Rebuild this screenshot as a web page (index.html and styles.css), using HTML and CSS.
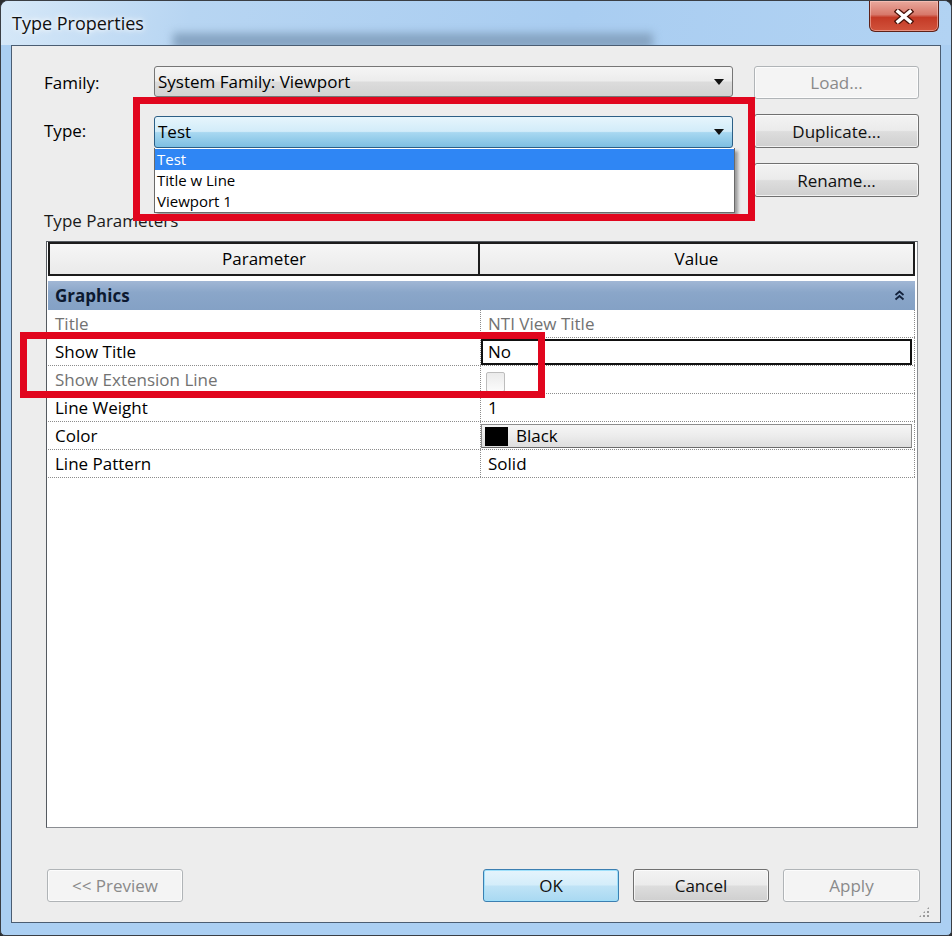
FILE: index.html
```html
<!DOCTYPE html>
<html lang="en">
<head>
    <meta charset="UTF-8">
    <title>Type Properties</title>
    <link rel="stylesheet" href="styles.css">
</head>
<body>
    <div class="window">
        <!-- Title bar -->
        <div class="title-bar">
            <span class="title">Type Properties</span>
            <button class="close-btn" aria-label="Close">
                <svg width="20" height="15" viewBox="0 0 20 15">
                    <path d="M4 2.5 L16 12.5 M16 2.5 L4 12.5" stroke="#4a1209" stroke-width="6" stroke-linecap="square" fill="none"/>
                    <path d="M4 2.5 L16 12.5 M16 2.5 L4 12.5" stroke="#ffffff" stroke-width="3.4" stroke-linecap="square" fill="none"/>
                </svg>
            </button>
        </div>

        <div class="frame">
            <div class="client">
                <!-- Family / Type selectors -->
                <div class="top-grid">
                    <label class="field-label">Family:</label>
                    <div class="combo combo-family">
                        <span>System Family: Viewport</span>
                        <span class="arrow"></span>
                    </div>
                    <button class="btn" disabled>Load...</button>

                    <label class="field-label">Type:</label>
                    <div class="combo combo-open">
                        <span>Test</span>
                        <span class="arrow"></span>
                        <ul class="dropdown">
                            <li class="selected">Test</li>
                            <li>Title w Line</li>
                            <li>Viewport 1</li>
                        </ul>
                    </div>
                    <button class="btn">Duplicate...</button>

                    <button class="btn rename-btn">Rename...</button>
                </div>

                <div class="section-label">Type Parameters</div>

                <!-- Parameter table -->
                <div class="param-table">
                    <div class="table-head">
                        <div class="th">Parameter</div>
                        <div class="th">Value</div>
                    </div>
                    <div class="group-row">
                        <span>Graphics</span>
                        <svg class="collapse" width="11" height="11" viewBox="0 0 11 11">
                            <path d="M1.5 5 L5.5 1.5 L9.5 5 M1.5 9.5 L5.5 6 L9.5 9.5" stroke="#14233d" stroke-width="1.8" fill="none"/>
                        </svg>
                    </div>
                    <div class="row dim">
                        <div class="cell">Title</div>
                        <div class="cell">NTI View Title</div>
                    </div>
                    <div class="row">
                        <div class="cell">Show Title</div>
                        <div class="cell"><div class="edit-box">No</div></div>
                    </div>
                    <div class="row dim">
                        <div class="cell">Show Extension Line</div>
                        <div class="cell"><span class="checkbox"></span></div>
                    </div>
                    <div class="row">
                        <div class="cell">Line Weight</div>
                        <div class="cell">1</div>
                    </div>
                    <div class="row">
                        <div class="cell">Color</div>
                        <div class="cell"><div class="color-btn"><span class="swatch"></span>Black</div></div>
                    </div>
                    <div class="row">
                        <div class="cell">Line Pattern</div>
                        <div class="cell">Solid</div>
                    </div>
                </div>

                <!-- Dialog buttons -->
                <div class="button-row">
                    <button class="btn" disabled>&lt;&lt; Preview</button>
                    <div class="spacer"></div>
                    <button class="btn btn-default">OK</button>
                    <button class="btn">Cancel</button>
                    <button class="btn" disabled>Apply</button>
                </div>

                <!-- Annotation boxes -->
                <div class="highlight hl-type"></div>
                <div class="highlight hl-title"></div>
                <div class="grip"></div>
            </div>
        </div>
    </div>
</body>
</html>
```

FILE: styles.css
```css
* {
    margin: 0;
    padding: 0;
    box-sizing: border-box;
}

body {
    background-color: #2b2d30;
    font-family: "Open Sans", "Noto Sans", sans-serif;
    font-size: 17px;
    color: #000000;
}

.window {
    width: 952px;
    height: 936px;
    border: 1px solid #3a3e44;
    border-radius: 8px 8px 5px 5px;
    background-color: #abcff2;
    display: flex;
    flex-direction: column;
    overflow: hidden;
}

/* Title bar */

.title-bar {
    position: relative;
    height: 44px;
    flex-shrink: 0;
    display: flex;
    justify-content: space-between;
    align-items: flex-start;
    background: linear-gradient(100deg, #d6e8f8 0%, #b7d5f2 20%, #a9cdf1 60%, #b2d3f3 100%);
}

.title-bar::before {
    content: "";
    position: absolute;
    left: 172px;
    top: 32px;
    width: 480px;
    height: 16px;
    background-color: #86a4c2;
    filter: blur(4px);
}

.title {
    position: relative;
    padding: 10px 0 0 11px;
    font-size: 18px;
    line-height: 24px;
    color: #111111;
    text-shadow: 0 0 8px #ffffff, 0 0 4px #ffffff;
}

.close-btn {
    position: relative;
    width: 70px;
    height: 31px;
    margin-right: 12px;
    border: 1px solid #5e2118;
    border-top: none;
    border-radius: 0 0 6px 6px;
    background: linear-gradient(#e9a99d 0%, #d8786a 45%, #c43a26 55%, #d1533c 100%);
    box-shadow: inset 0 0 0 1px rgba(255, 210, 200, 0.5);
    display: flex;
    justify-content: center;
    align-items: center;
}

/* Frame and client area */

.frame {
    flex: 1;
    padding: 0 10px 12px 10px;
    display: flex;
}

.client {
    position: relative;
    flex: 1;
    background-color: #ededed;
    border: 1px solid #4b5d72;
    display: flex;
    flex-direction: column;
}

.top-grid {
    display: grid;
    grid-template-columns: 89px 579px 165px;
    grid-template-rows: 33px 34px 34px;
    column-gap: 21px;
    row-gap: 15px;
    padding: 20px 0 0 32px;
}

.field-label {
    align-self: center;
    line-height: 22px;
}

.combo {
    position: relative;
    display: flex;
    align-items: center;
    justify-content: space-between;
    padding: 0 8px 0 3px;
    border: 1px solid #767676;
    border-radius: 3px;
    line-height: 22px;
}

.combo-family {
    align-self: start;
    height: 31px;
    background: linear-gradient(#f5f5f5 0%, #ececec 48%, #dcdcdc 52%, #d2d2d2 100%);
}

.combo-open {
    align-self: end;
    height: 32px;
    border-color: #2c5f86;
    background: linear-gradient(#e6f5fc 0%, #d2ecf9 48%, #a8d8f1 52%, #7dbfe2 100%);
}

.arrow {
    width: 0;
    height: 0;
    border-left: 5px solid transparent;
    border-right: 5px solid transparent;
    border-top: 6px solid #111111;
}

.dropdown {
    position: absolute;
    top: 31px;
    left: -1px;
    width: 581px;
    list-style: none;
    background-color: #ffffff;
    border: 1px solid #6a6a6a;
    border-top: none;
    box-shadow: 3px 3px 3px rgba(0, 0, 0, 0.35);
    z-index: 2;
}

.dropdown li {
    height: 21px;
    font-size: 15px;
    line-height: 21px;
    padding-left: 2px;
}

.dropdown li.selected {
    margin-top: 1px;
    background-color: #2f86f4;
    color: #ffffff;
}

/* Buttons */

.btn {
    font-family: inherit;
    font-size: 17px;
    color: #111111;
    border: 1px solid #707070;
    border-radius: 3px;
    background: linear-gradient(#f3f3f3 0%, #ebebeb 48%, #dddddd 52%, #cfcfcf 100%);
    box-shadow: inset 0 0 0 1px rgba(255, 255, 255, 0.7);
}

.btn:disabled {
    color: #8a8a8a;
    border-color: #b0b4b7;
    background: #f4f4f4;
}

.btn-default {
    border-color: #3c7fb1;
    background: linear-gradient(#e5f4fc 0%, #d4edfa 48%, #bfe3f6 52%, #a9d9f2 100%);
    box-shadow: inset 0 0 0 1px #9ee0fb;
}

.rename-btn {
    grid-column: 3;
}

.section-label {
    margin: 13px 0 0 32px;
    line-height: 22px;
    color: #1a1a1a;
}

/* Parameter table */

.param-table {
    margin: 9px 0 0 34px;
    width: 872px;
    height: 587px;
    padding: 0 2px 0 1px;
    background-color: #ffffff;
    border: 1px solid #8a8d92;
    border-left-color: #555a60;
    border-top-color: #555a60;
}

.table-head {
    display: grid;
    grid-template-columns: 432px 435px;
    height: 34px;
    background: linear-gradient(#f7f7f7, #e9e9e9);
}

.th {
    border: 2px solid #1c1c1c;
    text-align: center;
    line-height: 30px;
}

.th + .th {
    border-left: none;
}

.group-row {
    margin-top: 5px;
    height: 29px;
    display: flex;
    align-items: center;
    justify-content: space-between;
    padding: 0 10px 0 7px;
    font-weight: bold;
    color: #0c1930;
    background: linear-gradient(#a1b7d5 0%, #8aa6c9 40%, #84a1c5 100%);
}

.row {
    display: grid;
    grid-template-columns: 432px 435px;
    height: 28px;
    border-bottom: 1px dotted #8c8c8c;
}

.cell {
    display: flex;
    align-items: center;
    padding-left: 7px;
    line-height: 22px;
}

.cell + .cell {
    border-left: 1px dotted #8c8c8c;
    border-right: 1px dotted #8c8c8c;
}

.row.dim .cell {
    color: #727272;
}

.row:has(.edit-box) > .cell + .cell,
.row:has(.color-btn) > .cell + .cell {
    padding: 0;
    align-items: stretch;
}

.edit-box {
    flex: 1;
    border: 2px solid #111111;
    padding-left: 5px;
    line-height: 22px;
    display: flex;
    align-items: center;
    margin: 1px 2px 0 0;
}

.checkbox {
    width: 19px;
    height: 20px;
    margin-top: 4px;
    margin-left: -2px;
    border: 1px solid #bdbdbd;
    border-radius: 2px;
    background: linear-gradient(#ebebeb, #fbfbfb);
}

.color-btn {
    flex: 1;
    display: flex;
    align-items: center;
    gap: 8px;
    margin: 2px 2px 1px 0;
    padding-left: 3px;
    border: 1px solid #8c8c8c;
    border-bottom-color: #6a6a6a;
    background: linear-gradient(#f6f6f6 0%, #ececec 50%, #dedede 100%);
}

.swatch {
    width: 23px;
    height: 19px;
    background-color: #000000;
}

/* Bottom buttons */

.button-row {
    display: flex;
    gap: 14px;
    margin-top: 41px;
    padding: 0 20px 0 35px;
}

.button-row .btn {
    width: 136px;
    height: 33px;
}

.button-row .btn:last-child {
    width: 137px;
}

.spacer {
    flex: 1;
}

/* Red annotation boxes */

.highlight {
    position: absolute;
    border: 7px solid #e1061e;
    z-index: 3;
}

.hl-type {
    left: 121px;
    top: 51px;
    width: 622px;
    height: 124px;
}

.hl-title {
    left: 8px;
    top: 286px;
    width: 525px;
    height: 66px;
}

.grip {
    position: absolute;
    right: 10px;
    bottom: 4px;
    width: 12px;
    height: 12px;
    background-image: radial-gradient(circle, #9a9a9a 1px, transparent 1.3px);
    background-size: 4px 4px;
    clip-path: polygon(100% 0, 100% 100%, 0 100%);
}
```
